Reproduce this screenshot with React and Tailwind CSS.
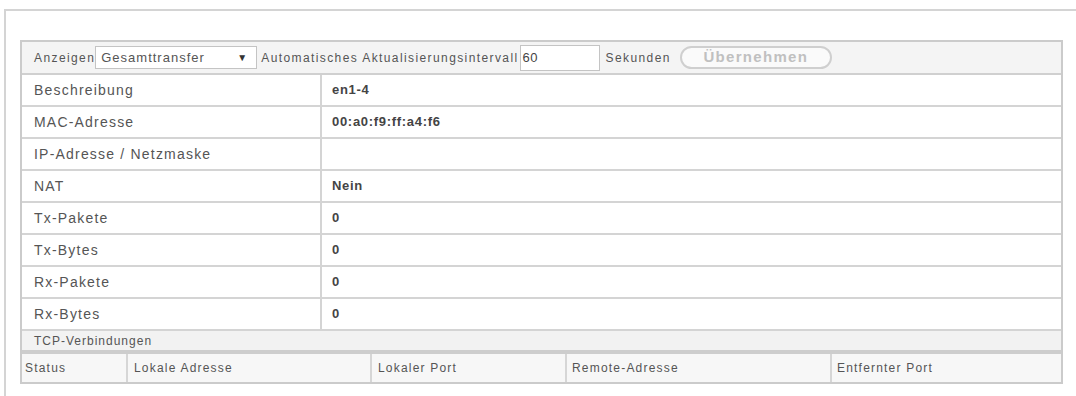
import React from 'react';

const rows = [
  ['Beschreibung', 'en1-4'],
  ['MAC-Adresse', '00:a0:f9:ff:a4:f6'],
  ['IP-Adresse / Netzmaske', ''],
  ['NAT', 'Nein'],
  ['Tx-Pakete', '0'],
  ['Tx-Bytes', '0'],
  ['Rx-Pakete', '0'],
  ['Rx-Bytes', '0'],
];

const tcpCols = [
  { label: 'Status', w: 'w-[106px]', pad: 'pl-[3px]' },
  { label: 'Lokale Adresse', w: 'w-[244px]', pad: 'pl-[6px]' },
  { label: 'Lokaler Port', w: 'w-[195px]', pad: 'pl-[6px]' },
  { label: 'Remote-Adresse', w: 'w-[265px]', pad: 'pl-[5px]' },
  { label: 'Entfernter Port', w: 'flex-1', pad: 'pl-[5px]' },
];

export default function App() {
  return (
    <div className="w-[1076px] h-[396px] overflow-hidden bg-white font-['Liberation_Sans',Arial,sans-serif] text-[#4a4a4a]">
      {/* outer frame, runs off the right and bottom edge */}
      <div className="ml-[4px] mt-[9px] w-[1090px] h-[400px] border-l-2 border-t-2 border-[#d4d4d4] pl-[14px] pt-[29px]">
        <div className="w-[1043px] border-2 border-[#cbcbcb]">
          {/* toolbar */}
          <div className="h-[33px] bg-[#f4f4f4] border-b-2 border-[#d0d0d0] flex items-center pl-[12px] text-[12px] tracking-[1.4px] text-[#555] whitespace-nowrap">
            <span>Anzeigen</span>
            <div className="w-[162px] h-[23px] bg-white border border-[#c4c4c4] flex items-center justify-between pl-[5px] pr-[9px] text-[13px] tracking-[1px] text-[#555]">
              <span>Gesamttransfer</span>
              <span className="text-[10px] text-[#333] tracking-normal">▼</span>
            </div>
            <span className="ml-[4px]">Automatisches Aktualisierungsintervall</span>
            <div className="ml-[1px] w-[80px] h-[26px] bg-white border border-[#c4c4c4] flex items-center pl-[2px] text-[13px] tracking-[0.5px] text-[#444]">
              60
            </div>
            <span className="ml-[6px]">Sekunden</span>
            <div className="ml-[9px] w-[152px] h-[23px] rounded-full border-2 border-[#cfcfcf] bg-[#fafafa] flex items-center justify-center text-[15px] font-bold tracking-[1.3px] text-[#c0c0c0]">
              Übernehmen
            </div>
          </div>

          {rows.map(([label, value]) => (
            <div key={label} className="h-[32px] flex border-b-2 border-[#d4d4d4] bg-white text-[14px]">
              <div className="w-[300px] border-r-2 border-[#d4d4d4] flex items-center pl-[12px] tracking-[1.2px] text-[#555]">
                {label}
              </div>
              <div className="flex-1 flex items-center pl-[10px] font-bold text-[13px] tracking-[0.7px] text-[#444]">
                {value}
              </div>
            </div>
          ))}

          {/* TCP section */}
          <div className="h-[23px] bg-[#f2f2f2] border-b-[4px] border-[#cdcdcd] flex items-center pl-[12px] text-[12px] tracking-[1px] text-[#555]">
            TCP-Verbindungen
          </div>
          <div className="h-[28px] flex bg-[#f7f7f7] text-[12px] tracking-[1.2px] text-[#555]">
            {tcpCols.map((c, i) => (
              <div
                key={c.label}
                className={`${c.w} ${c.pad} flex items-center ${i < tcpCols.length - 1 ? 'border-r-2 border-[#d6d6d6]' : ''}`}
              >
                {c.label}
              </div>
            ))}
          </div>
        </div>
      </div>
    </div>
  );
}
